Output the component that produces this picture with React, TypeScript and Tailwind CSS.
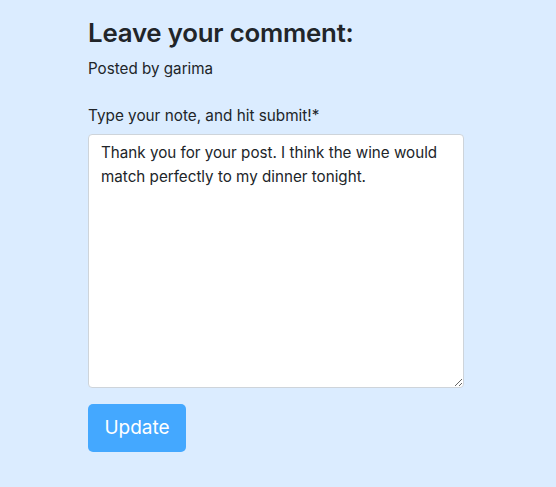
import React from "react";

export default function App() {
  return (
    <div className="min-h-[487px] w-full bg-[#dbecff] text-[#212529]" style={{ fontFamily: "Inter, 'Liberation Sans', sans-serif" }}>
      <div className="pl-[88px] pt-[18px] w-[464px] box-content">
        <h2 className="text-[25.8px] font-semibold leading-[1.2] mb-[8px] tracking-[-0.2px]">Leave your comment:</h2>
        <p className="text-[15.2px] leading-[24px] mb-[23px]">Posted by garima</p>
        <label className="block text-[15.3px] leading-[24px] mb-[6px]">Type your note, and hit submit!*</label>
        <textarea
          className="block w-[376px] h-[254px] bg-white border border-[#ced4da] rounded-[4px] px-[12px] py-[6px] text-[15.2px] leading-[24px] text-[#212529] outline-none"
          defaultValue="Thank you for your post. I think the wine would match perfectly to my dinner tonight."
        />
        <button className="mt-[16px] w-[98px] h-[48px] rounded-[5px] bg-[#44a8ff] text-white text-[19px]">Update</button>
      </div>
    </div>
  );
}
